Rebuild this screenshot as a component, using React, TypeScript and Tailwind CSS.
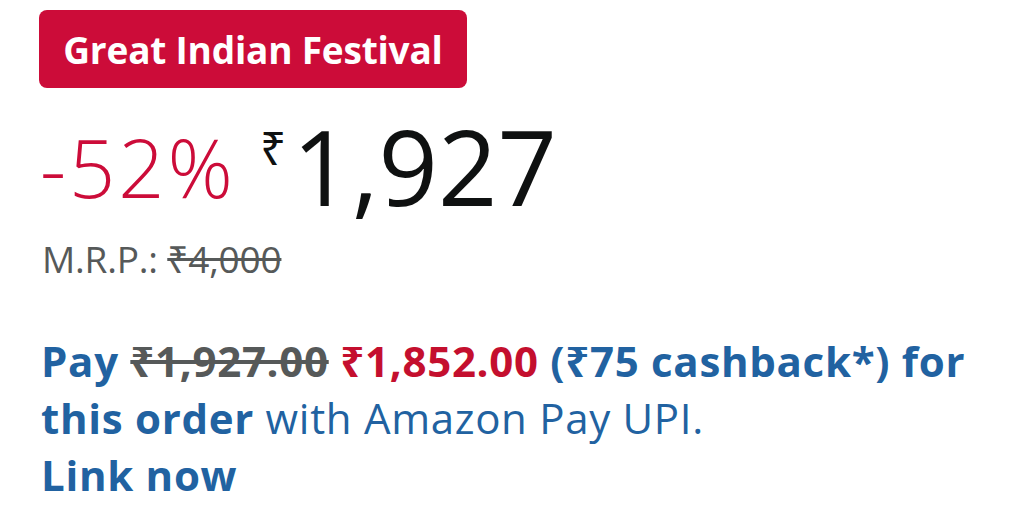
import React from "react";

export default function App() {
  return (
    <div
      className="w-[1013px] h-[518px] bg-white overflow-hidden"
      style={{ fontFamily: '"Open Sans", "Noto Sans", sans-serif' }}
    >
      <div className="pl-[39px] pt-[10px]">
        <div className="inline-flex h-[78px] w-[428px] items-center justify-center rounded-[8px] bg-[#cc0c39]">
          <span className="text-[37px] font-bold leading-none text-white tracking-[-0.2px] mt-[1px]">
            Great Indian Festival
          </span>
        </div>
      </div>

      <div className="flex items-start pl-[40px] mt-[26px] h-[112px]">
        <span className="text-[81px] font-light leading-none text-[#cc0c39] mt-[12px] tracking-[3px]">
          -52%
        </span>
        <span className="ml-[24px] mt-[10px] text-[46px] leading-none text-[#0f1111]">₹</span>
        <span className="ml-[6px] text-[104px] leading-none text-[#0f1111] tracking-[0px]">
          1,927
        </span>
      </div>

      <div className="pl-[42px] mt-[14px] text-[37px] leading-none text-[#565959] tracking-[-0.2px]">
        M.R.P.: <span className="line-through">₹4,000</span>
      </div>

      <div className="pl-[41px] pr-[20px] mt-[55px] text-[42px] leading-[57px] text-[#2162a1] tracking-[0.7px]">
        <span className="font-bold">Pay </span>
        <span className="font-bold text-[#565959] line-through">₹1,927.00</span>
        <span className="font-bold"> </span>
        <span className="font-bold text-[#c40f2e]">₹1,852.00</span>
        <span className="font-bold"> (₹75 cashback*) for this order</span>
        <span> with Amazon Pay UPI.</span>
        <br />
        <span className="font-bold">Link now</span>
      </div>
    </div>
  );
}
